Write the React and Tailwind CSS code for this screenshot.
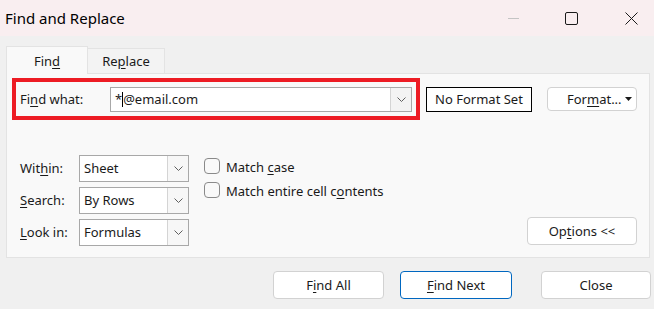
import React from 'react';

const U = ({ children }) => <span className="underline underline-offset-2">{children}</span>;

function Chevron() {
  return (
    <svg width="9" height="5" viewBox="0 0 9 5" fill="none">
      <path d="M0.5 0.5 L4.5 4.5 L8.5 0.5" stroke="#5f5f5f" strokeWidth="1" />
    </svg>
  );
}

function Select({ value }) {
  return (
    <div className="flex w-[110px] h-[27px] border border-[#a8a8a8] bg-white">
      <div className="flex-1 flex items-center pl-[4px]">{value}</div>
      <div className="w-[21px] flex items-center justify-center border-l border-[#d4d4d4] bg-[#f7f7f7]">
        <Chevron />
      </div>
    </div>
  );
}

function Checkbox({ children }) {
  return (
    <div className="flex items-center h-[16px] gap-[6px]">
      <div className="w-[16px] h-[16px] rounded-[4px] border border-[#8a8a8a] bg-[#f9f9f9]" />
      <span className="pt-[2px]">{children}</span>
    </div>
  );
}

function Button({ children, className = '' }) {
  return (
    <div className={`flex items-center justify-center h-[28px] rounded-[4px] border bg-white ${className}`}>
      {children}
    </div>
  );
}

export default function App() {
  return (
    <div className="w-[654px] h-[309px] overflow-hidden bg-[#f0f0f0] text-[13px] text-[#1a1a1a] font-['Segoe_UI','Noto_Sans',sans-serif] leading-none">
      {/* title bar */}
      <div className="h-[36px] bg-[#f9eef0] flex items-center pl-[5px]">
        <span className="text-[15px] text-black">Find and Replace</span>
        <div className="ml-auto flex items-center">
          <div className="w-[11px] h-px bg-[#c4c4c4] mr-[46px]" />
          <svg width="13" height="13" viewBox="0 0 13 13" className="mr-[47px]">
            <rect x="0.5" y="0.5" width="12" height="12" rx="1.5" fill="none" stroke="#1a1a1a" />
          </svg>
          <svg width="13" height="13" viewBox="0 0 13 13" className="mr-[16px]">
            <path d="M0.5 0.5 L12.5 12.5 M12.5 0.5 L0.5 12.5" stroke="#1a1a1a" strokeWidth="1" />
          </svg>
        </div>
      </div>

      {/* tabs */}
      <div className="flex items-end ml-[6px] mt-[10px] h-[27px]">
        <div className="relative z-10 -mb-px w-[82px] h-[28px] flex items-center justify-center border border-b-0 border-[#e3e3e3] bg-[#f9f9f9] pt-[2px]">
          Fin<U>d</U>
        </div>
        <div className="w-[77px] h-[25px] flex items-center justify-center border border-b-0 border-l-0 border-[#e3e3e3] bg-[#f3f3f3] pt-[1px]">
          Re<U>p</U>lace
        </div>
      </div>

      {/* panel */}
      <div className="ml-[6px] w-[644px] h-[185px] border border-[#e3e3e3] bg-[#f9f9f9] flex flex-col">
        <div className="flex items-center mt-[4px] ml-[5px]">
          <div className="w-[408px] h-[42px] border-4 border-[#ed1c24] flex items-center pl-[4px]">
            <span className="w-[90px]">Fi<U>n</U>d what:</span>
            <div className="flex w-[302px] h-[25px] border border-[#a8a8a8] bg-white">
              <div className="flex-1 flex items-center pl-[4px]">
                *<span className="inline-block w-px h-[15px] bg-black" />@email.com
              </div>
              <div className="w-[21px] flex items-center justify-center border-l border-[#d4d4d4] bg-[#f3f3f3]">
                <Chevron />
              </div>
            </div>
          </div>
          <div className="ml-[6px] w-[106px] h-[25px] border border-black bg-white flex items-center justify-center">
            No Format Set
          </div>
          <div className="ml-[15px] w-[90px] h-[24px] rounded-[4px] border border-[#d2d2d2] bg-white flex items-center pl-[19px] pr-[4px]">
            <span>For<U>m</U>at...</span>
            <svg width="7" height="4" viewBox="0 0 7 4" className="ml-auto">
              <path d="M0 0 L7 0 L3.5 4 Z" fill="#1a1a1a" />
            </svg>
          </div>
        </div>

        <div className="flex items-end mt-[35px] ml-[13px]">
          <div className="flex flex-col gap-[5px]">
            <div className="flex items-center">
              <span className="w-[59px]">Wit<U>h</U>in:</span>
              <Select value="Sheet" />
            </div>
            <div className="flex items-center">
              <span className="w-[59px]"><U>S</U>earch:</span>
              <Select value="By Rows" />
            </div>
            <div className="flex items-center">
              <span className="w-[59px]"><U>L</U>ook in:</span>
              <Select value="Formulas" />
            </div>
          </div>
          <div className="self-start flex flex-col gap-[8px] ml-[15px] mt-[3px]">
            <Checkbox>Match <U>c</U>ase</Checkbox>
            <Checkbox>Match entire cell c<U>o</U>ntents</Checkbox>
          </div>
          <Button className="ml-auto mr-[12px] mb-px w-[110px] border-[#d2d2d2]">
            Op<U>t</U>ions &lt;&lt;
          </Button>
        </div>
      </div>

      {/* bottom buttons */}
      <div className="flex mt-[13px] ml-[273px]">
        <Button className="w-[111px] border-[#d2d2d2]">F<U>i</U>nd All</Button>
        <Button className="ml-[16px] w-[112px] border-[#0067c0]"><U>F</U>ind Next</Button>
        <Button className="ml-[29px] w-[110px] border-[#d2d2d2]">Close</Button>
      </div>
    </div>
  );
}
